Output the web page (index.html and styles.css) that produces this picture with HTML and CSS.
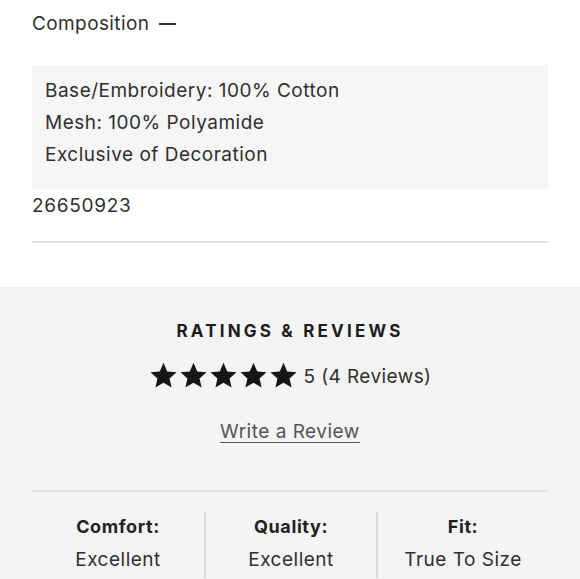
FILE: index.html
```html
<!DOCTYPE html>
<html>
    <head>
        <meta charset="utf-8">
        <link rel="stylesheet" href="styles.css">
    </head>
    <body>
        <div class="details">
            <div class="toggle">Composition <span class="dash"></span></div>
            <div class="compo">
                <p>Base/Embroidery: 100% Cotton</p>
                <p>Mesh: 100% Polyamide</p>
                <p>Exclusive of Decoration</p>
            </div>
            <div class="sku">26650923</div>
        </div>
        <div class="reviews">
            <h2>RATINGS &amp; REVIEWS</h2>
            <div class="rating">
                <span class="stars">
                    <svg viewBox="0 0 24 24"><path d="M12 1.5l3.1 7.1 7.7.7-5.8 5.1 1.7 7.6L12 18l-6.7 4 1.7-7.6-5.8-5.1 7.7-.7z"/></svg>
                    <svg viewBox="0 0 24 24"><path d="M12 1.5l3.1 7.1 7.7.7-5.8 5.1 1.7 7.6L12 18l-6.7 4 1.7-7.6-5.8-5.1 7.7-.7z"/></svg>
                    <svg viewBox="0 0 24 24"><path d="M12 1.5l3.1 7.1 7.7.7-5.8 5.1 1.7 7.6L12 18l-6.7 4 1.7-7.6-5.8-5.1 7.7-.7z"/></svg>
                    <svg viewBox="0 0 24 24"><path d="M12 1.5l3.1 7.1 7.7.7-5.8 5.1 1.7 7.6L12 18l-6.7 4 1.7-7.6-5.8-5.1 7.7-.7z"/></svg>
                    <svg viewBox="0 0 24 24"><path d="M12 1.5l3.1 7.1 7.7.7-5.8 5.1 1.7 7.6L12 18l-6.7 4 1.7-7.6-5.8-5.1 7.7-.7z"/></svg>
                </span>
                <span class="score">5 (4 Reviews)</span>
            </div>
            <a class="write" href="#">Write a Review</a>
            <div class="summary">
                <div class="col">
                    <b>Comfort:</b>
                    <span>Excellent</span>
                </div>
                <div class="col">
                    <b>Quality:</b>
                    <span>Excellent</span>
                </div>
                <div class="col">
                    <b>Fit:</b>
                    <span>True To Size</span>
                </div>
            </div>
        </div>
    </body>
</html>
```

FILE: styles.css
```css
*{
    box-sizing: border-box;
    margin: 0px;
    padding: 0px;
}
body
{
    font-family: "Inter", "Noto Sans", sans-serif;
    color: #2f2f2f;
    background: #fff;
    height: 579px;
    overflow: hidden;
}
.details
{
    padding: 10px 32px 0 32px;
}
.details .toggle
{
    font-size: 19px;
    line-height: 28px;
    letter-spacing: 0.4px;
    display: flex;
    align-items: center;
    gap: 10px;
}
.dash
{
    display: inline-block;
    width: 17px;
    height: 2px;
    background: #2f2f2f;
}
.compo
{
    margin-top: 27px;
    background: #f6f6f6;
    padding: 10px 13px 20px 13px;
    height: 125px;
}
.compo p
{
    font-size: 19px;
    line-height: 32px;
    letter-spacing: 0.5px;
}
.sku
{
    font-size: 19px;
    letter-spacing: 0.7px;
    line-height: 32px;
    padding-bottom: 19px;
    border-bottom: 2px solid #e2e2e2;
}
.reviews
{
    margin-top: 44px;
    background: #f4f4f4;
    padding: 33px 32px 0 32px;
    text-align: center;
    height: 300px;
}
.reviews h2
{
    font-size: 17px;
    font-weight: 700;
    letter-spacing: 3.2px;
    color: #1c1c1c;
    line-height: 22px;
}
.rating
{
    display: flex;
    justify-content: center;
    align-items: center;
    gap: 6px;
    margin-top: 17px;
    height: 32px;
}
.stars
{
    display: flex;
    gap: 1px;
}
.stars svg
{
    width: 29px;
    height: 29px;
    fill: #161616;
}
.score
{
    font-size: 19px;
    letter-spacing: 0.4px;
    padding-top: 3px;
}
.write
{
    display: inline-block;
    margin-top: 27px;
    font-size: 19px;
    letter-spacing: 0.5px;
    color: #555;
    text-decoration: underline;
    text-underline-offset: 4px;
    line-height: 28px;
}
.summary
{
    margin-top: 44px;
    border-top: 2px solid #e2e2e2;
    display: grid;
    grid-template-columns: 1fr 1fr 1fr;
    padding-top: 20px;
}
.col
{
    display: flex;
    flex-direction: column;
    align-items: center;
    border-left: 2px solid #dcdcdc;
    height: 66px;
}
.col:first-child
{
    border-left: none;
}
.col b
{
    font-size: 18px;
    font-weight: 700;
    letter-spacing: 0.6px;
    color: #222;
    line-height: 30px;
}
.col span
{
    font-size: 19px;
    letter-spacing: 0.5px;
    line-height: 36px;
}
```
